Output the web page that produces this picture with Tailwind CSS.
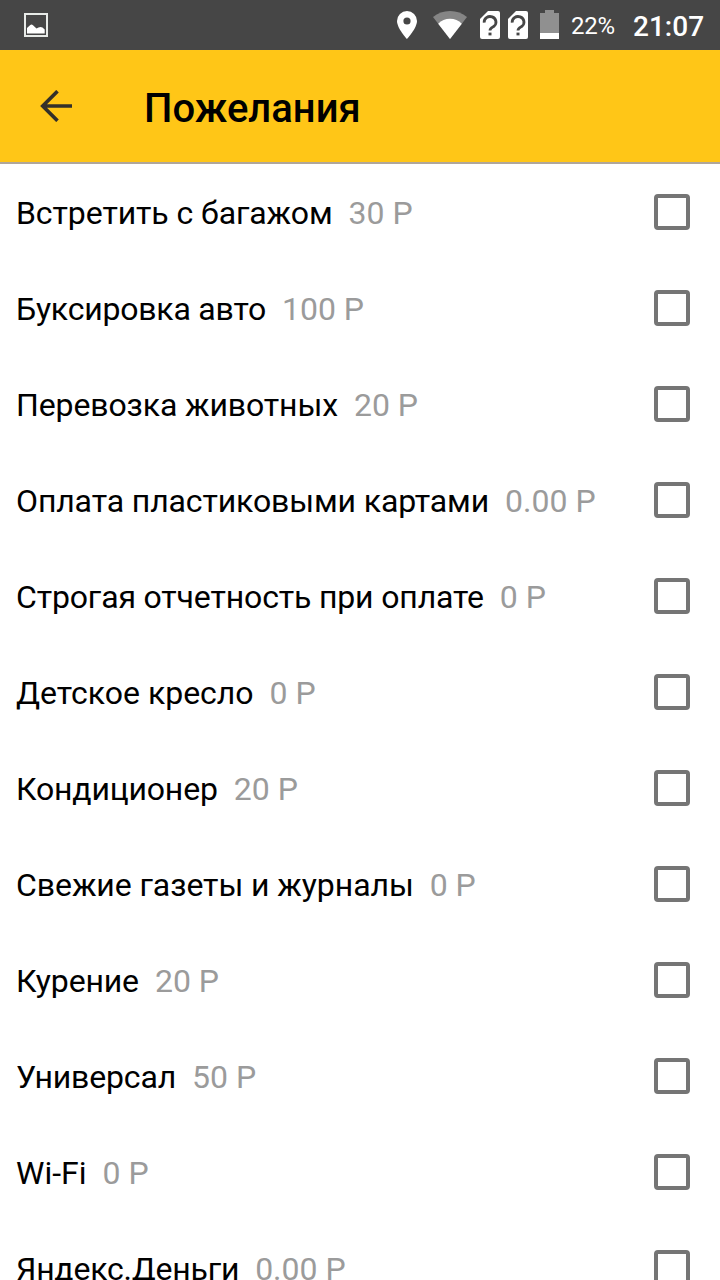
<!DOCTYPE html>
<html lang="ru">
<head>
<meta charset="utf-8">
<title>Пожелания</title>
<script src="https://cdn.jsdelivr.net/npm/@tailwindcss/browser@4"></script>
</head>
<body class="h-[1280px] w-[720px] overflow-hidden bg-white font-['Roboto',sans-serif] text-black">
<div class="flex h-[1280px] flex-col overflow-hidden">
  <div class="flex h-[50px] shrink-0 items-center bg-[#464646] text-white">
    <svg class="ml-6 h-6 w-6" viewBox="0 0 24 24"><rect x="1" y="1" width="22" height="22" fill="none" stroke="#e8ebe8" stroke-width="2"/><path d="M3 20.500v-5.500l3-2.800q1.500-1.200 3 0l3.500 3.200 2-1q2-1 4 0l2.200 2v4z" fill="#fff"/></svg>
    <svg class="ml-auto h-7 w-5" viewBox="0 0 20 28"><path fill="#fff" fill-rule="evenodd" d="M10 0A10 10 0 0 0 0 10c0 7.300 10 18 10 18s10-10.700 10-18A10 10 0 0 0 10 0zm0 6.400a3.600 3.600 0 1 1 0 7.200 3.600 3.600 0 0 1 0-7.200z"/></svg>
    <svg class="ml-4 h-7 w-[34px]" viewBox="0 0 34 28"><path fill="#858585" d="M0 6Q7 0 17 0t17 6L17 28z"/><path fill="#fff" d="M5.200 12.700Q10 7.700 17 7.700T28.800 12.700L17 28z"/></svg>
    <svg class="ml-[13px] h-7 w-5" viewBox="0 0 20 28"><path fill="#fff" d="M8 0h10q2 0 2 2v24q0 2-2 2H2q-2 0-2-2V8z"/><path d="M4.200 11.700A5.900 5.600 0 1 1 14 15.300C11.500 16.800 10 17.300 10 19.600" fill="none" stroke="#464646" stroke-width="2.800"/><path d="M8.500 21.600h3v2.800h-3z" fill="#464646"/></svg>
    <svg class="ml-2 h-7 w-5" viewBox="0 0 20 28"><path fill="#fff" d="M8 0h10q2 0 2 2v24q0 2-2 2H2q-2 0-2-2V8z"/><path d="M4.200 11.700A5.900 5.600 0 1 1 14 15.300C11.500 16.800 10 17.300 10 19.600" fill="none" stroke="#464646" stroke-width="2.800"/><path d="M8.500 21.600h3v2.800h-3z" fill="#464646"/></svg>
    <svg class="mb-px ml-3 h-[29px] w-[19px]" viewBox="0 0 19 29"><path fill="#909090" d="M5 0h9v3h5v20H0V3h5z"/><path fill="#fff" d="M0 23h19v6H0z"/></svg>
    <span class="mt-0.5 ml-3 w-[62px] text-2xl tracking-[-0.3px]">22%</span>
    <span class="mt-1 w-[87px] text-[28px] font-medium">21:07</span>
  </div>
  <header class="flex h-[114px] shrink-0 items-center border-b-2 border-[#b0a69a] bg-[#ffc617]">
    <svg class="ml-10 h-8 w-8" viewBox="0 0 32 32" fill="none" stroke="#33302a" stroke-width="3.600"><path d="M32 16H3M17.500 1.200 2.700 16l14.800 14.800"/></svg>
    <h1 class="mt-1.5 ml-[72px] text-[40px] font-medium">Пожелания</h1>
  </header>
  <ul class="[&>li]:flex [&>li]:h-24 [&>li]:items-center [&>li]:pr-[30px] [&>li]:pl-4 [&>li]:text-[32px] [&_span]:mt-0.5 [&_b]:mt-0.5 [&_b]:ml-4 [&_b]:font-normal [&_b]:text-[#9b9b9b] [&_i]:ml-auto [&_i]:size-9 [&_i]:rounded-[4px] [&_i]:border-4 [&_i]:border-[#757575]">
    <li><span class="tracking-[-0.09px]">Встретить с багажом</span><b>30 Р</b><i></i></li>
    <li><span class="tracking-[-0.22px]">Буксировка авто</span><b>100 Р</b><i></i></li>
    <li><span class="tracking-[-0.11px]">Перевозка животных</span><b>20 Р</b><i></i></li>
    <li><span class="tracking-[-0.12px]">Оплата пластиковыми картами</span><b>0.00 Р</b><i></i></li>
    <li><span class="tracking-[-0.15px]">Строгая отчетность при оплате</span><b>0 Р</b><i></i></li>
    <li><span>Детское кресло</span><b>0 Р</b><i></i></li>
    <li><span class="tracking-[-0.18px]">Кондиционер</span><b>20 Р</b><i></i></li>
    <li><span class="tracking-[-0.07px]">Свежие газеты и журналы</span><b>0 Р</b><i></i></li>
    <li><span class="tracking-[-0.14px]">Курение</span><b>20 Р</b><i></i></li>
    <li><span class="tracking-[-0.14px]">Универсал</span><b>50 Р</b><i></i></li>
    <li><span>Wi-Fi</span><b>0 Р</b><i></i></li>
    <li><span class="tracking-[-0.23px]">Яндекс.Деньги</span><b>0.00 Р</b><i></i></li>
  </ul>
</div>
</body>
</html>
